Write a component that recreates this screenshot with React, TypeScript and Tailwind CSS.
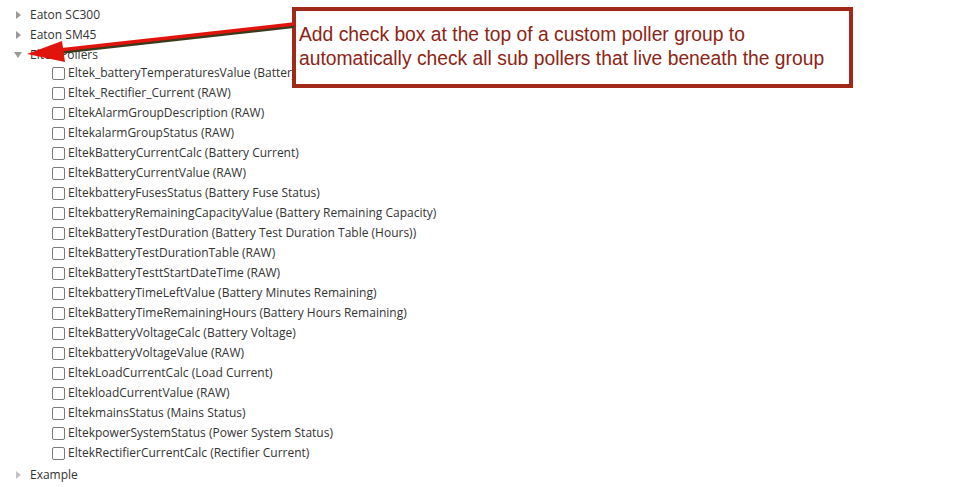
const children = [
  "Eltek_batteryTemperaturesValue (Battery",
  "Eltek_Rectifier_Current (RAW)",
  "EltekAlarmGroupDescription (RAW)",
  "EltekalarmGroupStatus (RAW)",
  "EltekBatteryCurrentCalc (Battery Current)",
  "EltekBatteryCurrentValue (RAW)",
  "EltekbatteryFusesStatus (Battery Fuse Status)",
  "EltekbatteryRemainingCapacityValue (Battery Remaining Capacity)",
  "EltekBatteryTestDuration (Battery Test Duration Table (Hours))",
  "EltekBatteryTestDurationTable (RAW)",
  "EltekBatteryTesttStartDateTime (RAW)",
  "EltekbatteryTimeLeftValue (Battery Minutes Remaining)",
  "EltekBatteryTimeRemainingHours (Battery Hours Remaining)",
  "EltekBatteryVoltageCalc (Battery Voltage)",
  "EltekbatteryVoltageValue (RAW)",
  "EltekLoadCurrentCalc (Load Current)",
  "EltekloadCurrentValue (RAW)",
  "EltekmainsStatus (Mains Status)",
  "EltekpowerSystemStatus (Power System Status)",
  "EltekRectifierCurrentCalc (Rectifier Current)",
];

function Caret({ open = false, light = false }: { open?: boolean; light?: boolean }) {
  return (
    <span className="flex w-[30px] shrink-0 items-center justify-center pl-[6px]">
      {open ? (
        <svg width="8" height="6" viewBox="0 0 8 6">
          <polygon points="0,0 8,0 4,6" fill="#9a9a9a" />
        </svg>
      ) : (
        <svg width="5" height="8" viewBox="0 0 5 8">
          <polygon points="0,0 5,4 0,8" fill={light ? "#c4c4c4" : "#9a9a9a"} />
        </svg>
      )}
    </span>
  );
}

function GroupRow({ label, open, light }: { label: string; open?: boolean; light?: boolean }) {
  return (
    <div className="flex h-[20px] items-center">
      <Caret open={open} light={light} />
      <span>{label}</span>
    </div>
  );
}

export default function App() {
  return (
    <div className="relative h-[487px] w-[964px] overflow-hidden bg-white font-['Open_Sans',sans-serif] text-[12px] text-[#333]">
      <div className="pt-[5px]">
        <GroupRow label="Eaton SC300" />
        <GroupRow label="Eaton SM45" />
        <GroupRow label="Eltek Pollers" open />
        <div className="-mt-[2px]">
          {children.map((c) => (
            <div key={c} className="flex h-[20px] items-center pl-[52px]">
              <span className="mr-[3px] h-[13px] w-[13px] shrink-0 rounded-[2px] border border-[#7a7a7a] bg-white" />
              <span className="whitespace-nowrap">{c}</span>
            </div>
          ))}
        </div>
        <div className="mt-[2px]">
          <GroupRow label="Example" light />
        </div>
      </div>

      <div className="absolute left-[292px] top-[7px] h-[81px] w-[561px] border-[4px] border-[#a2281a] bg-white pl-[3px] pt-[12px] font-['Liberation_Sans',Arial,sans-serif] text-[19.3px] leading-[24px] text-[#8e2414]">
        <p>Add check box at the top of a custom poller group to</p>
        <p>automatically check all sub pollers that live beneath the group</p>
      </div>

      <svg className="absolute left-0 top-0" width="300" height="80" viewBox="0 0 300 80">
        <line x1="294" y1="26.5" x2="55" y2="53" stroke="#3a3a1c" strokeWidth="3" />
        <line x1="294" y1="24" x2="55" y2="50.5" stroke="#e0140c" strokeWidth="3.5" />
        <polygon points="27,54 62,41 65,62" fill="#e0140c" />
      </svg>
    </div>
  );
}
